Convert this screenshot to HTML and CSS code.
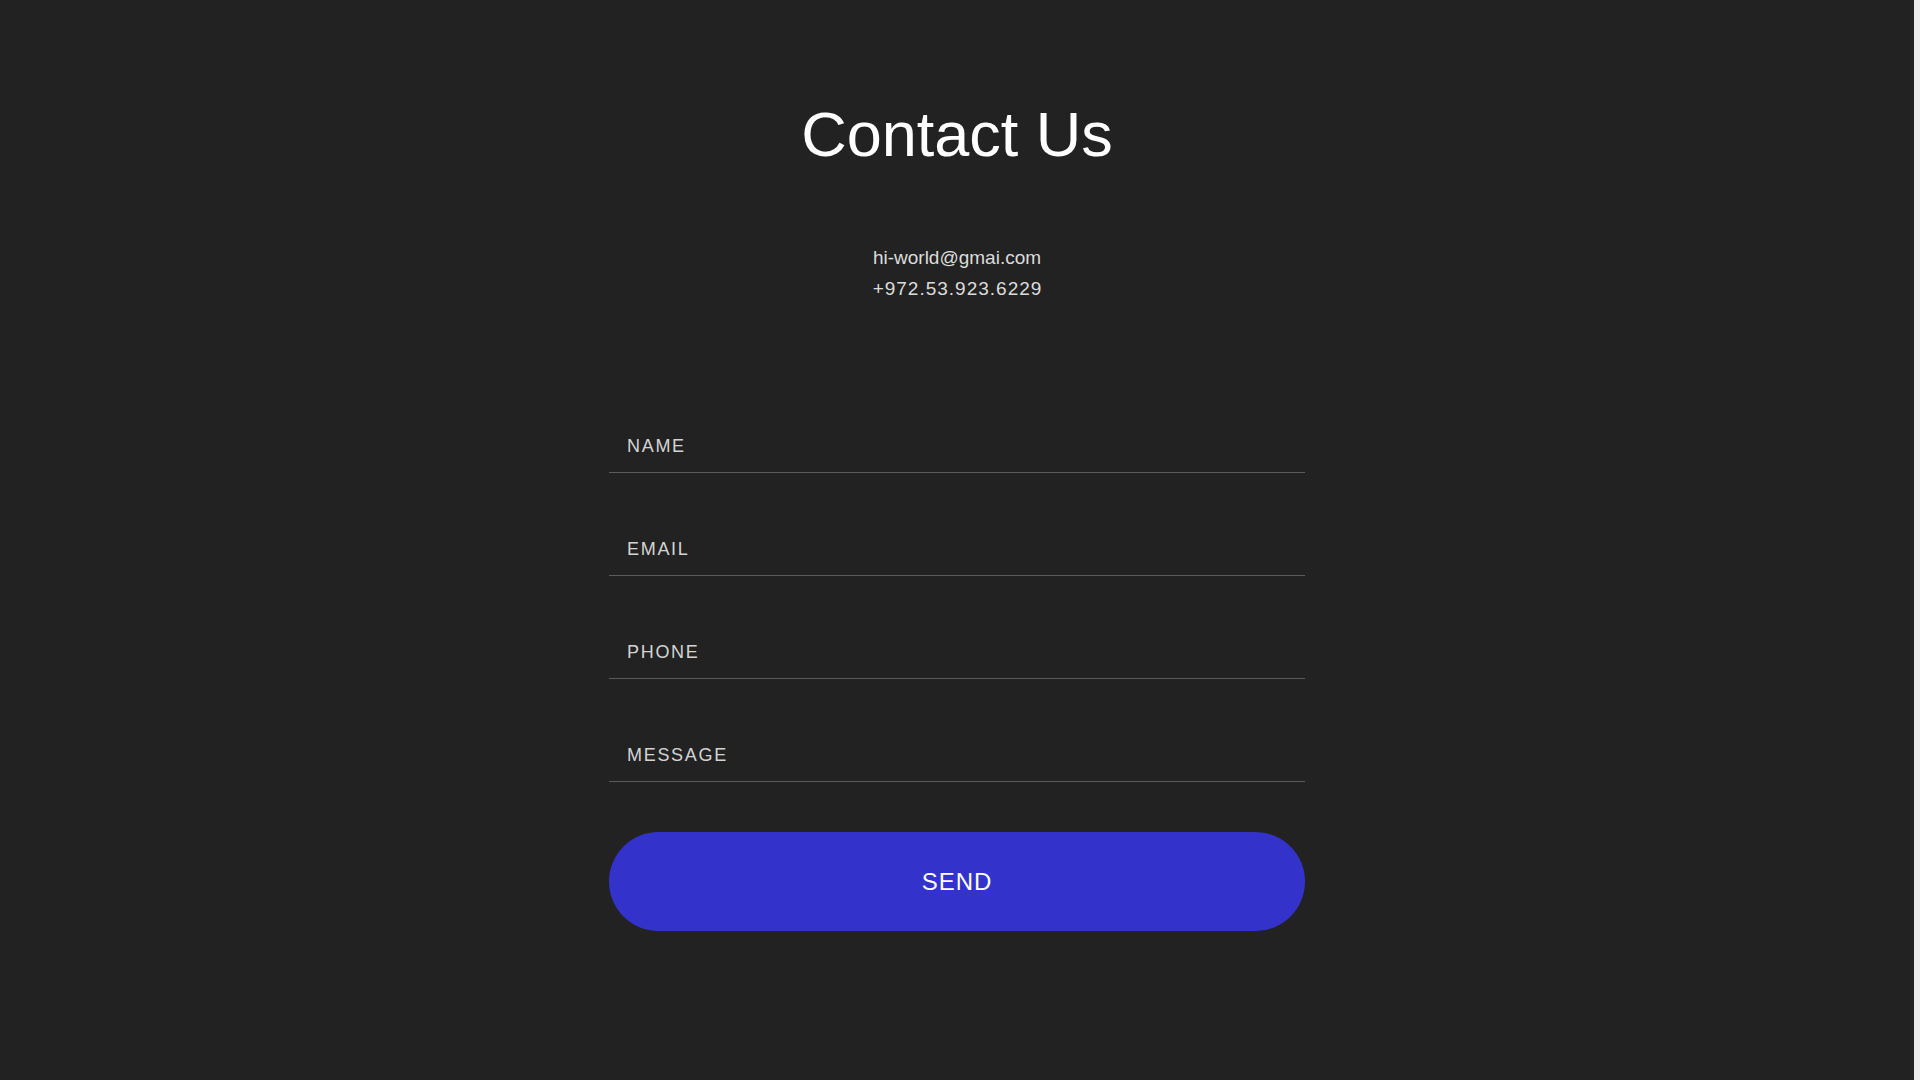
FILE: index.html
```html
<!DOCTYPE html>
<html lang="en">
<head>
<meta charset="utf-8">
<title>Contact Us</title>
<link rel="stylesheet" href="styles.css">
</head>
<body>
<div class="page">
  <main class="main">
    <h1 class="title">Contact Us</h1>
    <div class="contact">
      <p class="contact-line">hi-world@gmai.com</p>
      <p class="contact-line phone">+972.53.923.6229</p>
    </div>
    <form class="form">
      <div class="field"><span class="label">NAME</span></div>
      <div class="field"><span class="label">EMAIL</span></div>
      <div class="field"><span class="label">PHONE</span></div>
      <div class="field"><span class="label">MESSAGE</span></div>
      <button type="button" class="send">SEND</button>
    </form>
  </main>
  <div class="scroll-strip"></div>
</div>
</body>
</html>
```
FILE: styles.css
```css
* { box-sizing: border-box; }
html, body {
  margin: 0;
  padding: 0;
  height: 100%;
}
body {
  background: #222222;
  font-family: "Liberation Sans", Arial, sans-serif;
  color: #ffffff;
  overflow: hidden;
}
.page {
  display: flex;
  height: 1080px;
}
.main {
  flex: 1;
  display: flex;
  flex-direction: column;
  align-items: center;
  background: #222222;
}
.scroll-strip {
  width: 6px;
  background: #ececec;
}
.title {
  margin: 103px 0 0 0;
  font-size: 63px;
  line-height: 63px;
  font-weight: 400;
  color: #ffffff;
}
.contact {
  margin-top: 76px;
  display: flex;
  flex-direction: column;
  align-items: center;
}
.contact-line {
  margin: 0;
  font-size: 19px;
  line-height: 31px;
  color: #dcdcdc;
}
.phone {
  letter-spacing: 1px;
  margin-left: 1px;
}
.form {
  margin-top: 66px;
  width: 696px;
  display: flex;
  flex-direction: column;
}
.field {
  padding: 65px 18px 15px 18px;
  border-bottom: 1px solid #5a5a5a;
}
.label {
  display: block;
  font-size: 18px;
  line-height: 22px;
  letter-spacing: 1.7px;
  color: #d4d4d4;
}
.send {
  margin-top: 50px;
  height: 99px;
  width: 100%;
  border: none;
  border-radius: 50px;
  background: #3333cc;
  color: #ffffff;
  font-family: "Liberation Sans", Arial, sans-serif;
  font-size: 24px;
  letter-spacing: 1px;
  cursor: pointer;
}
```
